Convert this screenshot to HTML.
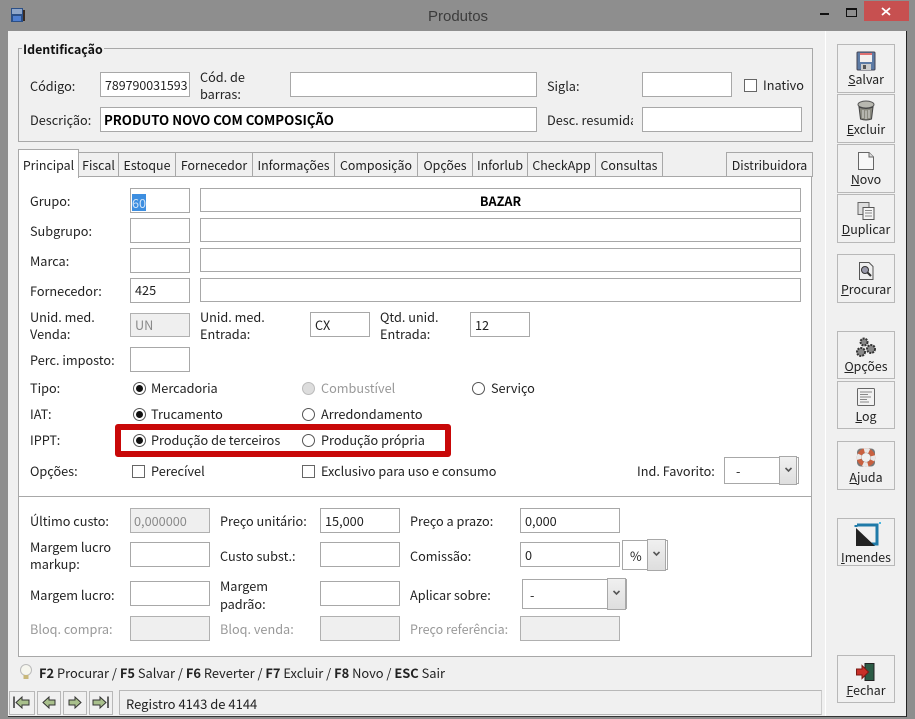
<!DOCTYPE html>
<html lang="pt"><head><meta charset="utf-8"><title>Produtos</title>
<style>
html,body{margin:0;padding:0;width:915px;height:719px;overflow:hidden;background:#8e8e8e}
body{position:relative;font-family:"Noto Sans CJK JP","Liberation Sans",sans-serif;font-size:12.7px;color:#222;letter-spacing:0}
div,span,svg{position:absolute;box-sizing:border-box}
.t{white-space:nowrap;line-height:17px;margin-top:-1px}
.i{background:#fff;border:1px solid #a8a8a8;white-space:nowrap;line-height:24px;padding-left:4px;color:#222}
.d{background:#efefef;color:#8a8a8a;border-color:#b0b0b0}
.g{color:#999}
.r{width:13px;height:13px;border:1px solid #555;border-radius:50%;background:#fff}
.r.c:after{content:"";position:absolute;left:2px;top:2px;width:7px;height:7px;border-radius:50%;background:#111}
.c0{width:13px;height:13px;border:1px solid #666;background:#fff}
.tab{top:152px;height:25px;background:#f0f0f0;border:1px solid #a8a8a8;text-align:center;line-height:25px;white-space:nowrap;border-left:0;font-size:12.4px}
.b{left:837px;width:58px;background:#f0f0f0;border:1px solid #b8b8b8;text-align:center}
.b span{left:0;right:0;bottom:5px;line-height:15px;white-space:nowrap;text-align:center;font-size:12.4px}
.b svg{left:17px;top:5px}
u{text-decoration:underline}
.nav{top:691px;height:24px;background:#f0f0f0;border:1px solid #b8b8b8}
.cb{background:#fff;border:1px solid #a8a8a8}
.ar{background:linear-gradient(#f0f0f0,#dedede);border:1px solid #a8a8a8}
</style></head><body>

<!-- title bar -->
<svg style="left:10px;top:7px" width="16" height="17" viewBox="0 0 16 17"><rect x="1" y="1" width="12" height="14" fill="#2b4f86"/><rect x="2" y="2" width="10" height="5" fill="#8fa6c8"/><rect x="3" y="9" width="8" height="5" fill="#4f7fd0"/><rect x="13" y="3" width="2" height="11" fill="#3a2a20"/></svg>
<div class="t" style="left:428px;top:9px;font-size:15px;color:#3c3c3c;font-family:'Liberation Sans',sans-serif">Produtos</div>
<div style="left:820px;top:13px;width:9px;height:2px;background:#111"></div>
<div style="left:846px;top:8px;width:11px;height:9px;border:1px solid #111;border-top-width:2px"></div>
<div style="left:864px;top:1px;width:45px;height:20px;background:#c75050"></div>
<svg style="left:881px;top:7px" width="10" height="9" viewBox="0 0 10 9"><path d="M1 1L9 8M9 1L1 8" stroke="#fff" stroke-width="1.8"/></svg>

<!-- client -->
<div style="left:8px;top:31px;width:899px;height:686px;background:#f0f0f0;border-right:1px solid #222;border-bottom:1px solid #333"></div>
<div style="left:825px;top:31px;width:1px;height:685px;background:#fff"></div>

<!-- Identificacao -->
<div style="left:18px;top:48px;width:795px;height:94px;border:1px solid #a8a8a8"></div>
<div class="t" style="left:22px;top:42px;background:#f0f0f0;padding:0 1px;font-weight:bold;color:#111;font-size:12.4px">Identificação</div>
<div class="t" style="left:30px;top:78px">Código:</div>
<div class="i" style="left:100px;top:72px;width:90px;height:25px;font-size:12.4px">789790031593</div>
<div class="t" style="left:200px;top:69px">Cód. de</div><div class="t" style="left:200px;top:86px">barras:</div>
<div class="i" style="left:290px;top:72px;width:247px;height:25px"></div>
<div class="t" style="left:547px;top:78px">Sigla:</div>
<div class="i" style="left:642px;top:72px;width:90px;height:25px"></div>
<div class="c0" style="left:744px;top:79px"></div>
<div class="t" style="left:763px;top:77px">Inativo</div>
<div class="t" style="left:30px;top:112px">Descrição:</div>
<div class="i" style="left:100px;top:107px;width:437px;height:25px;font-weight:bold;color:#000;font-size:13.2px;padding-left:3px">PRODUTO NOVO COM COMPOSIÇÃO</div>
<div class="t" style="left:547px;top:112px;width:86px;overflow:hidden">Desc. resumida</div>
<div class="i" style="left:642px;top:107px;width:160px;height:25px"></div>

<!-- tabs -->
<div class="tab" style="left:79px;width:40px">Fiscal</div>
<div class="tab" style="left:119px;width:57px">Estoque</div>
<div class="tab" style="left:176px;width:77px">Fornecedor</div>
<div class="tab" style="left:253px;width:82px">Informações</div>
<div class="tab" style="left:335px;width:83px">Composição</div>
<div class="tab" style="left:418px;width:55px">Opções</div>
<div class="tab" style="left:473px;width:55px">Inforlub</div>
<div class="tab" style="left:528px;width:68px">CheckApp</div>
<div class="tab" style="left:596px;width:67px">Consultas</div>
<div class="tab" style="left:726px;width:87px;border-left:1px solid #a8a8a8">Distribuidora</div>

<!-- panels -->
<div style="left:18px;top:176px;width:794px;height:481px;background:#fff;border:1px solid #a8a8a8"></div>
<div style="left:19px;top:496px;width:793px;height:1px;background:#a8a8a8"></div>
<div class="tab" style="left:18px;top:149px;width:61px;height:29px;background:#fff;border-left:1px solid #a8a8a8;border-bottom:0;line-height:31px">Principal</div>

<!-- principal -->
<div class="t" style="left:30px;top:193px">Grupo:</div>
<div class="i" style="left:130px;top:188px;width:60px;height:25px;padding-left:1px"><span style="position:static;background:#3d8ee0;color:#cfe3f7;display:inline-block;line-height:17px;vertical-align:middle">60</span></div>
<div class="i" style="left:200px;top:188px;width:601px;height:24px;text-align:center;font-weight:bold;color:#000;padding:0">BAZAR</div>
<div class="t" style="left:30px;top:223px">Subgrupo:</div>
<div class="i" style="left:130px;top:218px;width:60px;height:25px"></div>
<div class="i" style="left:200px;top:218px;width:601px;height:24px"></div>
<div class="t" style="left:30px;top:253px">Marca:</div>
<div class="i" style="left:130px;top:248px;width:60px;height:25px"></div>
<div class="i" style="left:200px;top:248px;width:601px;height:24px"></div>
<div class="t" style="left:30px;top:283px">Fornecedor:</div>
<div class="i" style="left:130px;top:278px;width:60px;height:25px;line-height:22px">425</div>
<div class="i" style="left:200px;top:278px;width:601px;height:24px"></div>
<div class="t" style="left:30px;top:309px">Unid. med.</div><div class="t" style="left:30px;top:326px">Venda:</div>
<div class="i d" style="left:130px;top:313px;width:60px;height:24px;line-height:22px">UN</div>
<div class="t" style="left:200px;top:309px">Unid. med.</div><div class="t" style="left:200px;top:326px">Entrada:</div>
<div class="i" style="left:310px;top:312px;width:60px;height:25px">CX</div>
<div class="t" style="left:380px;top:309px">Qtd. unid.</div><div class="t" style="left:380px;top:326px">Entrada:</div>
<div class="i" style="left:470px;top:312px;width:60px;height:25px">12</div>
<div class="t" style="left:30px;top:352px">Perc. imposto:</div>
<div class="i" style="left:130px;top:347px;width:60px;height:25px"></div>

<div class="t" style="left:30px;top:380px">Tipo:</div>
<div class="r c" style="left:133px;top:382px"></div><div class="t" style="left:151px;top:380px">Mercadoria</div>
<div class="r" style="left:302px;top:382px;background:#ddd;border-color:#bbb"></div><div class="t g" style="left:321px;top:380px">Combustível</div>
<div class="r" style="left:472px;top:382px"></div><div class="t" style="left:491px;top:380px">Serviço</div>
<div class="t" style="left:30px;top:406px">IAT:</div>
<div class="r c" style="left:133px;top:408px"></div><div class="t" style="left:151px;top:406px">Trucamento</div>
<div class="r" style="left:302px;top:408px"></div><div class="t" style="left:321px;top:406px">Arredondamento</div>
<div class="t" style="left:30px;top:432px">IPPT:</div>
<div style="left:115px;top:424px;width:336px;height:33px;border:6px solid #c80808;border-radius:3px"></div>
<div class="r c" style="left:133px;top:434px"></div><div class="t" style="left:151px;top:432px">Produção de terceiros</div>
<div class="r" style="left:302px;top:434px"></div><div class="t" style="left:321px;top:432px">Produção própria</div>
<div class="t" style="left:30px;top:463px">Opções:</div>
<div class="c0" style="left:132px;top:465px"></div><div class="t" style="left:151px;top:463px">Perecível</div>
<div class="c0" style="left:302px;top:465px"></div><div class="t" style="left:321px;top:463px">Exclusivo para uso e consumo</div>
<div class="t" style="left:637px;top:463px">Ind. Favorito:</div>
<div class="cb" style="left:724px;top:457px;width:75px;height:27px"></div>
<div class="t" style="left:736px;top:463px">-</div>
<div class="ar" style="left:779px;top:456px;width:18px;height:29px"></div>
<svg style="left:785px;top:467px" width="7" height="6" viewBox="0 0 7 6"><path d="M.5 1L3.5 4L6.5 1" fill="none" stroke="#555" stroke-width="1.6"/></svg>

<!-- price panel -->
<div class="t" style="left:30px;top:513px">Último custo:</div>
<div class="i d" style="left:130px;top:508px;width:80px;height:25px;padding-left:3px">0,000000</div>
<div class="t" style="left:220px;top:513px">Preço unitário:</div>
<div class="i" style="left:320px;top:508px;width:80px;height:25px">15,000</div>
<div class="t" style="left:410px;top:513px">Preço a prazo:</div>
<div class="i" style="left:520px;top:508px;width:100px;height:25px">0,000</div>
<div class="t" style="left:30px;top:539px">Margem lucro</div><div class="t" style="left:30px;top:556px">markup:</div>
<div class="i" style="left:130px;top:542px;width:80px;height:25px"></div>
<div class="t" style="left:220px;top:548px">Custo subst.:</div>
<div class="i" style="left:320px;top:542px;width:80px;height:25px"></div>
<div class="t" style="left:410px;top:548px">Comissão:</div>
<div class="i" style="left:520px;top:542px;width:100px;height:25px">0</div>
<div class="cb" style="left:622px;top:540px;width:46px;height:30px"></div>
<div class="t" style="left:630px;top:548px">%</div>
<div class="ar" style="left:647px;top:539px;width:19px;height:32px"></div>
<svg style="left:653px;top:551px" width="7" height="6" viewBox="0 0 7 6"><path d="M.5 1L3.5 4L6.5 1" fill="none" stroke="#555" stroke-width="1.6"/></svg>
<div class="t" style="left:30px;top:587px">Margem lucro:</div>
<div class="i" style="left:130px;top:581px;width:80px;height:25px"></div>
<div class="t" style="left:220px;top:578px">Margem</div><div class="t" style="left:220px;top:596px">padrão:</div>
<div class="i" style="left:320px;top:581px;width:80px;height:25px"></div>
<div class="t" style="left:410px;top:587px">Aplicar sobre:</div>
<div class="cb" style="left:522px;top:579px;width:105px;height:30px"></div>
<div class="t" style="left:530px;top:587px">-</div>
<div class="ar" style="left:607px;top:578px;width:19px;height:32px"></div>
<svg style="left:613px;top:590px" width="7" height="6" viewBox="0 0 7 6"><path d="M.5 1L3.5 4L6.5 1" fill="none" stroke="#555" stroke-width="1.6"/></svg>
<div class="t g" style="left:30px;top:621px">Bloq. compra:</div>
<div class="i d" style="left:130px;top:616px;width:80px;height:25px"></div>
<div class="t g" style="left:220px;top:621px">Bloq. venda:</div>
<div class="i d" style="left:320px;top:616px;width:80px;height:25px"></div>
<div class="t g" style="left:410px;top:621px;font-size:12.5px">Preço referência:</div>
<div class="i d" style="left:520px;top:616px;width:100px;height:25px"></div>

<!-- shortcuts -->
<svg style="left:19px;top:664px" width="14" height="17" viewBox="0 0 14 17"><circle cx="7" cy="6" r="5.5" fill="#f6f6ee" stroke="#bbb"/><rect x="4.5" y="11" width="5" height="4" fill="#c9b87a"/></svg>
<div class="t" style="left:39px;top:665px;font-size:12.86px"><b>F2</b> Procurar / <b>F5</b> Salvar / <b>F6</b> Reverter / <b>F7</b> Excluir / <b>F8</b> Novo / <b>ESC</b> Sair</div>

<!-- nav -->
<div class="nav" style="left:9px;width:26px"></div>
<div class="nav" style="left:37px;width:24px"></div>
<div class="nav" style="left:63px;width:24px"></div>
<div class="nav" style="left:89px;width:24px"></div>
<svg style="left:12px;top:695px" width="98" height="15" viewBox="0 0 98 15"><g fill="#a9c08c" stroke="#333"><path d="M2 1.5V13" fill="none" stroke-width="1.5"/><path d="M4 7.5L10 2V5H17V10H10V13Z"/><path d="M31 7.5L37 2V5H43V10H37V13Z"/><path d="M69 7.5L63 2V5H57V10H63V13Z"/><path d="M96 1.5V13" fill="none" stroke-width="1.5"/><path d="M94 7.5L88 2V5H81V10H88V13Z"/></g></svg>
<div style="left:119px;top:690px;width:703px;height:25px;border:1px solid #b8b8b8;border-right-color:#ccc"></div>
<div class="t" style="left:126px;top:696px;font-size:13px">Registro 4143 de 4144</div>

<!-- side buttons -->
<div class="b" style="top:44px;height:49px"><svg style="top:6px" width="22" height="20" viewBox="0 0 22 20"><rect x="2" y="1" width="18" height="18" rx="1" fill="#5d7ba5" stroke="#445"/><rect x="5" y="2" width="12" height="9" fill="#f4f0ee"/><rect x="5" y="2" width="12" height="2" fill="#e07070"/><rect x="6" y="13" width="10" height="6" fill="#ccc"/><rect x="8" y="14" width="3" height="4" fill="#555"/></svg><span><u>S</u>alvar</span></div>
<div class="b" style="top:94px;height:49px"><svg style="top:5px" width="22" height="21" viewBox="0 0 22 21"><ellipse cx="11" cy="4.5" rx="8" ry="3.5" fill="#b8b8b0" stroke="#555"/><path d="M4 7L5.5 19Q11 21 16.5 19L18 7Q11 10 4 7Z" fill="#8a8a80" stroke="#444"/><path d="M8 10V18M11 10.5V19M14 10V18" stroke="#ddd"/></svg><span><u>E</u>xcluir</span></div>
<div class="b" style="top:144px;height:49px"><svg style="top:6px" width="22" height="20" viewBox="0 0 22 20"><path d="M3.5 1.5H14L18.5 6V18.5H3.5Z" fill="#f7f7f7" stroke="#666"/><path d="M14 1.5V6H18.5" fill="#ddd" stroke="#666"/></svg><span><u>N</u>ovo</span></div>
<div class="b" style="top:194px;height:49px"><svg style="top:6px" width="22" height="20" viewBox="0 0 22 20"><rect x="3" y="1.5" width="11" height="12" fill="#ddd" stroke="#666"/><rect x="8" y="6.5" width="11" height="12" fill="#f4f4f4" stroke="#555"/><path d="M10 9.5H17M10 12H17M10 15H17" stroke="#888"/></svg><span><u>D</u>uplicar</span></div>
<div class="b" style="top:254px;height:49px"><svg style="top:6px" width="22" height="20" viewBox="0 0 22 20"><path d="M4.5 1.5H14L18 5.5V18.5H4.5Z" fill="#efefef" stroke="#555"/><circle cx="10" cy="9" r="3.5" fill="#99a" stroke="#333"/><path d="M12.5 11.5L16 15" stroke="#333" stroke-width="2"/></svg><span><u>P</u>rocurar</span></div>
<div class="b" style="top:331px;height:48px"><svg style="top:5px" width="22" height="21" viewBox="0 0 22 21"><circle cx="9" cy="5" r="3.5" fill="#888" stroke="#333" stroke-width="2" stroke-dasharray="2 1"/><circle cx="16" cy="12" r="4" fill="#888" stroke="#333" stroke-width="2" stroke-dasharray="2 1"/><circle cx="6" cy="15" r="4" fill="#888" stroke="#333" stroke-width="2" stroke-dasharray="2 1"/></svg><span style="bottom:4px"><u>O</u>pções</span></div>
<div class="b" style="top:381px;height:48px"><svg style="top:5px" width="22" height="20" viewBox="0 0 22 20"><rect x="2.5" y="1.5" width="17" height="17" rx="1" fill="#f2f2f2" stroke="#666"/><path d="M5 5H17M5 7.500H13M5 10H16M5 12.500H12M5 15H14" stroke="#888"/></svg><span style="bottom:4px"><u>L</u>og</span></div>
<div class="b" style="top:441px;height:49px"><svg style="top:5px" width="22" height="21" viewBox="0 0 22 21"><rect x="2" y="1.500" width="18" height="18" rx="4" fill="#777"/><circle cx="11" cy="10.500" r="7" fill="none" stroke="#c9603f" stroke-width="4.500"/><circle cx="11" cy="10.500" r="7" fill="none" stroke="#e8e8e8" stroke-width="4.500" stroke-dasharray="5 6" stroke-dashoffset="2"/><circle cx="11" cy="10.500" r="4.500" fill="#f0f0f0"/></svg><span style="bottom:4px"><u>A</u>juda</span></div>
<div class="b" style="top:518px;height:48px"><svg style="left:15px;top:3px" width="30" height="26" viewBox="0 0 30 26"><path d="M4 3H24V22H8" fill="none" stroke="#1f7aa8" stroke-width="3"/><path d="M3 3V5" stroke="#1f7aa8" stroke-width="3"/><path d="M3 6V24H22Z" fill="#222"/><path d="M26 0h2v2h-2z" fill="#4fb8e0"/></svg><span style="bottom:0"><u>I</u>mendes</span></div>
<div class="b" style="top:655px;height:48px"><svg style="top:6px" width="22" height="20" viewBox="0 0 22 20"><rect x="10" y="1.5" width="9" height="17" fill="#2b5b45" stroke="#222"/><path d="M1.5 7H7V3.5L13.5 10L7 16.5V13H1.5Z" fill="#c83028" stroke="#7a1a14"/></svg><span style="bottom:4px"><u>F</u>echar</span></div>
</body></html>
